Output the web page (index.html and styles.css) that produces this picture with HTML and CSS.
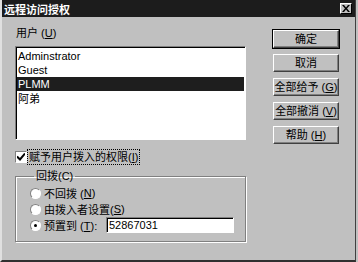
FILE: index.html
```html
<!DOCTYPE html>
<html lang="zh-CN">
  <head>
    <meta charset="UTF-8" />
    <title>远程访问授权</title>
    <link rel="stylesheet" href="styles.css">
  </head>
  <body>
    <div class="window">
      <div class="titlebar">
        <span class="title">远程访问授权</span>
        <span class="close">
          <svg width="8" height="7" viewBox="0 0 8 7">
            <path d="M0 0h2l2 2.5 2-2.5h2L5 3.5 8 7H6L4 4.5 2 7H0l3-3.5z" fill="#000" />
          </svg>
        </span>
      </div>
      <div class="content">
        <div class="left">
          <div class="label">用户 (<u>U</u>)</div>
          <div class="listbox">
            <div class="item">Adminstrator</div>
            <div class="item">Guest</div>
            <div class="item selected">PLMM</div>
            <div class="item cjk">阿弟</div>
          </div>
          <div class="check-row">
            <span class="checkbox">
              <svg width="8" height="8" viewBox="0 0 8 8">
                <path d="M0 3.5l3 3 5-6" stroke="#000" stroke-width="2" fill="none" />
              </svg>
            </span>
            <span class="focus">赋予用户拨入的权限(<u>I</u>)</span>
          </div>
          <fieldset class="group">
            <legend>回拨(C)</legend>
            <div class="radio-row"><span class="radio"></span>不回拨 (<u>N</u>)</div>
            <div class="radio-row"><span class="radio"></span>由拨入者设置(<u>S</u>)</div>
            <div class="radio-row">
              <span class="radio on"></span>
              <span class="radio-label">预置到 (<u>T</u>):</span>
              <span class="textbox">52867031</span>
            </div>
          </fieldset>
        </div>
        <div class="buttons">
          <button class="btn default">确定</button>
          <button class="btn">取消</button>
          <button class="btn">全部给予 (<u>G</u>)</button>
          <button class="btn">全部撤消 (<u>V</u>)</button>
          <button class="btn">帮助 (<u>H</u>)</button>
        </div>
      </div>
    </div>
  </body>
</html>
```

FILE: styles.css
```css
body {
  margin: 0;
  background-color: #c0c0c0;
  font-family: "Liberation Sans", "Noto Sans CJK SC", sans-serif;
  font-size: 11px;
  color: #000;
}
.window {
  width: 356px;
  height: 262px;
  box-sizing: border-box;
  background: #c0c0c0;
  border-left: 2px solid #e0e0e0;
  border-right: 1px solid #404040;
  border-bottom: 2px solid #303030;
}
.titlebar {
  height: 17px;
  background: #1c1c1c;
  color: #fff;
  display: flex;
  align-items: center;
  justify-content: space-between;
  padding: 0 3px 0 2px;
}
.title {
  font-size: 11px;
  font-weight: bold;
}
.close {
  width: 12px;
  height: 11px;
  box-sizing: border-box;
  background: #c0c0c0;
  border-top: 1px solid #fff;
  border-left: 1px solid #fff;
  border-right: 1px solid #000;
  border-bottom: 1px solid #000;
  display: flex;
  align-items: center;
  justify-content: center;
}
.content {
  display: flex;
  padding: 8px 0 0 13px;
}
.left {
  width: 231px;
}
.label {
  height: 16px;
  line-height: 16px;
  margin-bottom: 5px;
  padding-left: 1px;
}
.listbox {
  height: 94px;
  box-sizing: border-box;
  background: #fff;
  border-top: 1px solid #808080;
  border-left: 1px solid #808080;
  border-right: 1px solid #fff;
  border-bottom: 1px solid #fff;
  box-shadow: inset 1px 1px 0 #000;
  padding: 2px 1px 0 1px;
}
.item {
  height: 14px;
  line-height: 14px;
  padding-left: 1px;
  color: #000;
}
.item.cjk {
  font-family: "Noto Sans CJK SC", sans-serif;
  color: #000000;
}
.item.selected {
  background: #1e1e1e;
  color: #fff;
}
.check-row {
  display: flex;
  align-items: center;
  margin-top: 9px;
  height: 15px;
}
.checkbox {
  width: 12px;
  height: 12px;
  box-sizing: border-box;
  background: #fff;
  border-top: 1px solid #808080;
  border-left: 1px solid #808080;
  border-right: 1px solid #fff;
  border-bottom: 1px solid #fff;
  display: flex;
  align-items: center;
  justify-content: center;
}
.focus {
  margin-left: 1px;
  padding: 0 1px;
  line-height: 14px;
  outline: 1px dotted #000;
}
.group {
  margin: 6px 0 0;
  padding: 2px 0 0 14px;
  height: 72px;
  box-sizing: border-box;
  border: 1px solid #808080;
  box-shadow: 1px 1px 0 #fff, inset 1px 1px 0 #fff;
}
.group legend {
  margin-left: 4px;
  padding: 0 2px;
  line-height: 13px;
}
.radio-row {
  display: flex;
  align-items: center;
  height: 16px;
}
.radio {
  width: 11px;
  height: 11px;
  box-sizing: border-box;
  border-radius: 50%;
  background: #fff;
  border: 1px solid;
  border-color: #808080 #fff #fff #808080;
  margin-right: 3px;
  display: flex;
  align-items: center;
  justify-content: center;
}
.radio.on::after {
  content: "";
  width: 3px;
  height: 3px;
  border-radius: 50%;
  background: #000;
}
.radio-label {
  width: 62px;
}
.textbox {
  width: 128px;
  height: 16px;
  box-sizing: border-box;
  background: #fff;
  border-top: 1px solid #808080;
  border-left: 1px solid #808080;
  border-right: 1px solid #fff;
  border-bottom: 1px solid #fff;
  box-shadow: inset 1px 1px 0 #000;
  padding-left: 2px;
  line-height: 14px;
}
.buttons {
  display: flex;
  flex-direction: column;
  gap: 6px;
  margin-left: 27px;
  padding-top: 5px;
}
.btn {
  width: 66px;
  height: 18px;
  padding: 0;
  box-sizing: border-box;
  font-family: inherit;
  font-size: 11px;
  white-space: nowrap;
  color: #000;
  background: #c0c0c0;
  border: 1px solid;
  border-color: #fff #404040 #404040 #fff;
  box-shadow: inset -1px -1px 0 #808080;
  line-height: 14px;
}
.btn.default {
  outline: 1px solid #000;
}
```
